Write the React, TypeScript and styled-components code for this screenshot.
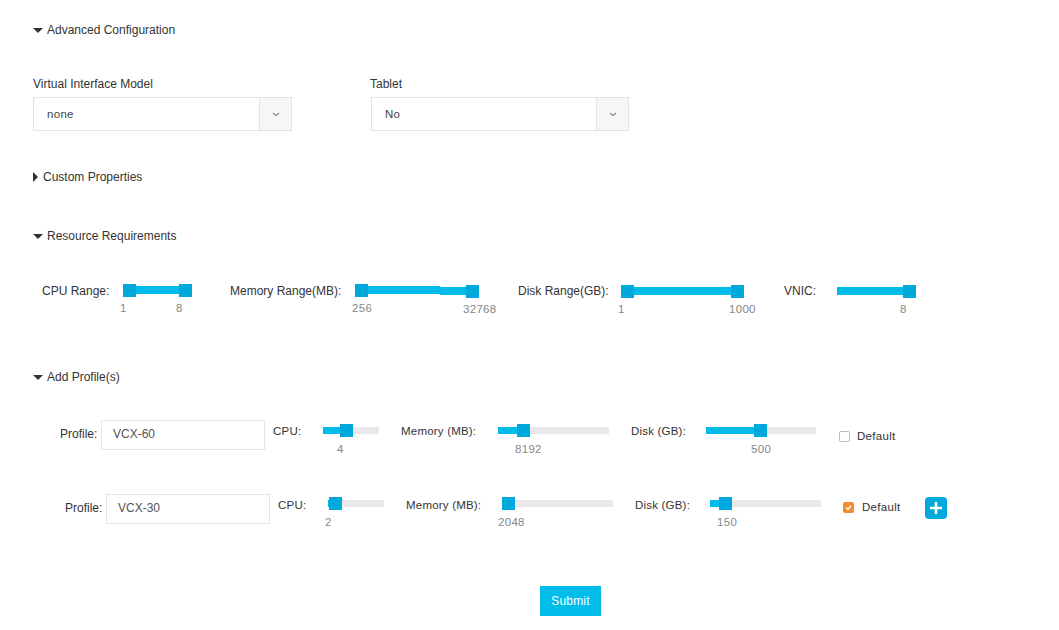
import React from "react";
import styled, { createGlobalStyle } from "styled-components";

const GlobalStyle = createGlobalStyle`
  html, body {
    margin: 0;
    padding: 0;
    background: #fff;
  }
  body {
    font-family: "Liberation Sans", Arial, sans-serif;
    font-size: 12px;
    color: #333;
  }
`;

type Thumb = { x: number; y?: number; value: string; valueX: number; valueY?: number };

type SliderProps = {
  width: number;
  fill: [number, number];
  thumbs: Thumb[];
  range?: boolean;
  drop?: boolean;
  step?: [number, number];
};

const Slider: React.FC<SliderProps> = ({ width, fill, thumbs, range, drop, step }) => (
  <SliderBox $w={width} $range={range} $drop={drop}>
    {!range && <Rail />}
    <Fill $range={range} style={{ left: fill[0], width: fill[1] - fill[0] }} />
    {step && <Fill $range $shift style={{ left: step[0], width: step[1] - step[0] }} />}
    {thumbs.map((t) => (
      <React.Fragment key={t.value}>
        <ThumbMark $range={range} style={{ left: t.x, marginTop: t.y ?? 0 }} />
        <ThumbValue style={{ left: t.valueX, top: range ? 17 + (t.valueY ?? 0) : 15 }}>{t.value}</ThumbValue>
      </React.Fragment>
    ))}
  </SliderBox>
);

const Section: React.FC<{ title: string; open?: boolean; pad: number; top: number; children?: React.ReactNode }> = ({
  title,
  open = true,
  pad,
  top,
  children,
}) => (
  <SectionBox $top={top}>
    <SectionHead $open={open}>
      {open ? <DownCaret /> : <RightCaret />}
      <span>{title}</span>
    </SectionHead>
    {children && <SectionBody $pad={pad}>{children}</SectionBody>}
  </SectionBox>
);

const Dropdown: React.FC<{ label: string; value: string; width: number; boxWidth: number; labelShift?: number }> = ({
  label,
  value,
  width,
  boxWidth,
  labelShift,
}) => (
  <Field $w={width}>
    <FieldLabel $shift={labelShift}>{label}</FieldLabel>
    <SelectBox $w={boxWidth}>
      <SelectValue>{value}</SelectValue>
      <SelectAddon>
        <svg width="8" height="5" viewBox="0 0 8 5">
          <path d="M1 1l3 2.4L7 1" fill="none" stroke="#888" strokeWidth="1.2" />
        </svg>
      </SelectAddon>
    </SelectBox>
  </Field>
);

type ProfileProps = {
  name: string;
  shift: number;
  cpu: Thumb;
  cpuFill: number;
  mem: Thumb;
  memFill: number;
  disk: Thumb;
  diskFill: number;
  diskWidth: number;
  trackTop: number;
  memGap: number;
  memLabel: number;
  checked?: boolean;
  gapTop: number;
  add?: boolean;
};

const ProfileRow: React.FC<ProfileProps> = ({
  name,
  shift,
  cpu,
  cpuFill,
  mem,
  memFill,
  disk,
  diskFill,
  diskWidth,
  trackTop,
  memGap,
  memLabel,
  checked,
  gapTop,
  add,
}) => (
  <Row $left={shift} $top={gapTop}>
    <ProfileLabel>Profile:</ProfileLabel>
    <NameInput>{name}</NameInput>
    <SliderLabel $w={50}>CPU:</SliderLabel>
    <SliderWell $top={trackTop}>
      <Slider width={56} fill={[0, cpuFill]} thumbs={[cpu]} />
    </SliderWell>
    <SliderLabel $w={memLabel} $left={memGap}>Memory (MB):</SliderLabel>
    <SliderWell $top={trackTop}>
      <Slider width={111} fill={[0, memFill]} thumbs={[mem]} />
    </SliderWell>
    <SliderLabel $w={75} $left={22}>Disk (GB):</SliderLabel>
    <SliderWell $top={trackTop}>
      <Slider width={diskWidth} fill={[0, diskFill]} thumbs={[disk]} />
    </SliderWell>
    <CheckLabel $checked={checked}>
      <CheckBox $checked={checked}>
        {checked && (
          <svg width="11" height="11" viewBox="0 0 11 11">
            <path d="M3 5.6l1.9 1.9L8 3.8" fill="none" stroke="#fff" strokeWidth="1.4" />
          </svg>
        )}
      </CheckBox>
      Default
    </CheckLabel>
    {add && (
      <AddButton>
        <svg width="14" height="14" viewBox="0 0 14 14">
          <path d="M7 1v12M1 7h12" fill="none" stroke="#fff" strokeWidth="2.6" />
        </svg>
      </AddButton>
    )}
  </Row>
);

export default function App() {
  return (
    <Page>
      <GlobalStyle />
      <Section title="Advanced Configuration" pad={0} top={0}>
        <FieldRow>
          <Dropdown label="Virtual Interface Model" value="none" width={338} boxWidth={259} />
          <Dropdown label="Tablet" value="No" width={258} boxWidth={258} labelShift={-1} />
        </FieldRow>
      </Section>

      <Section title="Custom Properties" open={false} pad={0} top={39} />
      <Section title="Resource Requirements" pad={9} top={45}>
        <RangeRow>
          <RangeLabel $w={81}>CPU Range:</RangeLabel>
          <Slider
            range
            width={68}
            fill={[6, 62]}
            thumbs={[
              { x: 0, value: "1", valueX: -3 },
              { x: 56, value: "8", valueX: 53 },
            ]}
          />
          <RangeLabel $w={125} $left={39}>Memory Range(MB):</RangeLabel>
          <Slider
            range
            width={124}
            fill={[6, 85]}
            step={[85, 115]}
            thumbs={[
              { x: 0, value: "256", valueX: -3 },
              { x: 111, y: 1, value: "32768", valueX: 108, valueY: 1 },
            ]}
          />
          <RangeLabel $w={103} $left={39}>Disk Range(GB):</RangeLabel>
          <Slider
            range
            drop
            width={123}
            fill={[6, 116]}
            thumbs={[
              { x: 0, value: "1", valueX: -3 },
              { x: 110, value: "1000", valueX: 108 },
            ]}
          />
          <RangeLabel $w={53} $left={40}>VNIC:</RangeLabel>
          <Slider
            range
            drop
            width={79}
            fill={[0, 74]}
            thumbs={[{ x: 66, value: "8", valueX: 63 }]}
          />
        </RangeRow>
      </Section>

      <Section title="Add Profile(s)" pad={0} top={72}>
        <ProfileRow
          name="VCX-60"
          shift={27}
          gapTop={0}
          trackTop={7}
          memGap={22}
          memLabel={97}
          cpu={{ x: 17, value: "4", valueX: 14 }}
          cpuFill={23}
          mem={{ x: 19, value: "8192", valueX: 17 }}
          memFill={25}
          disk={{ x: 48, value: "500", valueX: 45 }}
          diskFill={54}
          diskWidth={110}
        />
        <ProfileRow
          name="VCX-30"
          shift={32}
          gapTop={44}
          trackTop={6}
          memGap={22}
          memLabel={96}
          cpu={{ x: 1, value: "2", valueX: -3 }}
          cpuFill={7}
          mem={{ x: 0, value: "2048", valueX: -4 }}
          memFill={6}
          disk={{ x: 9, value: "150", valueX: 7 }}
          diskFill={15}
          diskWidth={111}
          checked
          add
        />
      </Section>
      <Footer>
        <SubmitButton type="button">Submit</SubmitButton>
      </Footer>
    </Page>
  );
}

const Page = styled.div`
  width: 1059px;
  height: 630px;
  box-sizing: border-box;
  padding: 23px 0 0 33px;
  overflow: hidden;
`;

const SectionBox = styled.section<{ $top: number }>`
  margin-top: ${(p) => p.$top}px;
`;

const SectionHead = styled.div<{ $open: boolean }>`
  display: flex;
  align-items: center;
  gap: ${(p) => (p.$open ? 4 : 5)}px;
  height: 14px;
  line-height: 14px;
  font-size: 12px;
  color: #333;
`;

const DownCaret = styled.i`
  width: 0;
  height: 0;
  border-left: 5px solid transparent;
  border-right: 5px solid transparent;
  border-top: 5px solid #333;
`;

const RightCaret = styled.i`
  width: 0;
  height: 0;
  border-top: 5px solid transparent;
  border-bottom: 5px solid transparent;
  border-left: 5px solid #333;
`;

const SectionBody = styled.div<{ $pad: number }>`
  padding-left: ${(p) => p.$pad}px;
  margin-top: 32px;
`;

const FieldRow = styled.div`
  display: flex;
  margin-top: 40px;
`;

const Field = styled.div<{ $w: number }>`
  width: ${(p) => p.$w}px;
`;

const FieldLabel = styled.div<{ $shift?: number }>`
  height: 14px;
  line-height: 14px;
  margin-bottom: 6px;
  margin-left: ${(p) => p.$shift ?? 0}px;
  color: #333;
`;

const SelectBox = styled.div<{ $w: number }>`
  display: flex;
  width: ${(p) => p.$w}px;
  height: 34px;
  box-sizing: border-box;
  border: 1px solid #e3e3e3;
`;

const SelectValue = styled.div`
  flex: 1;
  padding-left: 13px;
  line-height: 32px;
  font-size: 11.5px;
  letter-spacing: 0.3px;
  color: #444;
`;

const SelectAddon = styled.div`
  width: 31px;
  display: flex;
  align-items: center;
  justify-content: center;
  background: #f6f6f6;
  border-left: 1px solid #e3e3e3;
`;

const RangeRow = styled.div`
  display: flex;
  align-items: flex-start;
  margin-top: 41px;
`;

const RangeLabel = styled.div<{ $w: number; $left?: number }>`
  width: ${(p) => p.$w}px;
  margin-left: ${(p) => p.$left ?? 0}px;
  flex: none;
  line-height: 14px;
  color: #333;
`;

const SliderWell = styled.div<{ $top: number }>`
  flex: none;
  margin-top: ${(p) => p.$top}px;
`;

const SliderBox = styled.div<{ $w: number; $range?: boolean; $drop?: boolean }>`
  position: relative;
  flex: none;
  width: ${(p) => p.$w}px;
  height: ${(p) => (p.$range ? 13 : 7)}px;
  margin-top: ${(p) => (p.$drop ? 1 : 0)}px;
`;

const Rail = styled.div`
  position: absolute;
  inset: 0;
  background: #e9e9e9;
`;

const Fill = styled.div<{ $range?: boolean; $shift?: boolean }>`
  position: absolute;
  top: ${(p) => (p.$shift ? 3 : p.$range ? 2 : 0)}px;
  height: ${(p) => (p.$range ? 8 : 7)}px;
  background: #00bceb;
`;

const ThumbMark = styled.div<{ $range?: boolean }>`
  position: absolute;
  top: ${(p) => (p.$range ? 0 : -3)}px;
  width: 13px;
  height: 13px;
  background: #00a9dc;
`;

const ThumbValue = styled.span`
  position: absolute;
  line-height: 14px;
  font-size: 11.5px;
  letter-spacing: 0.3px;
  color: #888;
  white-space: nowrap;
`;

const Row = styled.div<{ $left: number; $top: number }>`
  display: flex;
  align-items: flex-start;
  margin-left: ${(p) => p.$left}px;
  margin-top: ${(p) => (p.$top ? p.$top : 36)}px;
  height: 30px;
`;

const ProfileLabel = styled.div`
  width: 41px;
  flex: none;
  line-height: 28px;
  color: #333;
`;

const NameInput = styled.div`
  width: 164px;
  height: 30px;
  flex: none;
  box-sizing: border-box;
  border: 1px solid #e6e6e6;
  padding-left: 11px;
  line-height: 27px;
  color: #555;
  margin-right: 8px;
`;

const SliderLabel = styled.div<{ $w: number; $left?: number }>`
  width: ${(p) => p.$w}px;
  margin-left: ${(p) => p.$left ?? 0}px;
  margin-top: 4px;
  flex: none;
  line-height: 14px;
  font-size: 11.5px;
  letter-spacing: 0.2px;
  color: #333;
`;

const CheckLabel = styled.label<{ $checked?: boolean }>`
  display: flex;
  align-items: center;
  gap: ${(p) => (p.$checked ? 8 : 7)}px;
  margin-left: ${(p) => (p.$checked ? 22 : 23)}px;
  margin-top: ${(p) => (p.$checked ? 6 : 9)}px;
  height: 14px;
  line-height: 14px;
  font-size: 11.5px;
  letter-spacing: 0.3px;
  color: #333;
`;

const CheckBox = styled.span<{ $checked?: boolean }>`
  display: block;
  width: 11px;
  height: 11px;
  box-sizing: border-box;
  border-radius: 2px;
  border: ${(p) => (p.$checked ? "none" : "1px solid #bbb")};
  background: ${(p) => (p.$checked ? "#f58a2c" : "#fff")};
`;

const AddButton = styled.div`
  width: 22px;
  height: 22px;
  margin-left: 24px;
  margin-top: 3px;
  border-radius: 4px;
  background: #00a9dc;
  display: flex;
  align-items: center;
  justify-content: center;
`;

const Footer = styled.div`
  display: flex;
  padding-left: 507px;
  margin-top: 62px;
`;

const SubmitButton = styled.button`
  width: 61px;
  height: 30px;
  padding: 0;
  border: none;
  background: #00bceb;
  color: #fff;
  font-family: "Liberation Sans", Arial, sans-serif;
  font-size: 12px;
  letter-spacing: 0.2px;
`;
